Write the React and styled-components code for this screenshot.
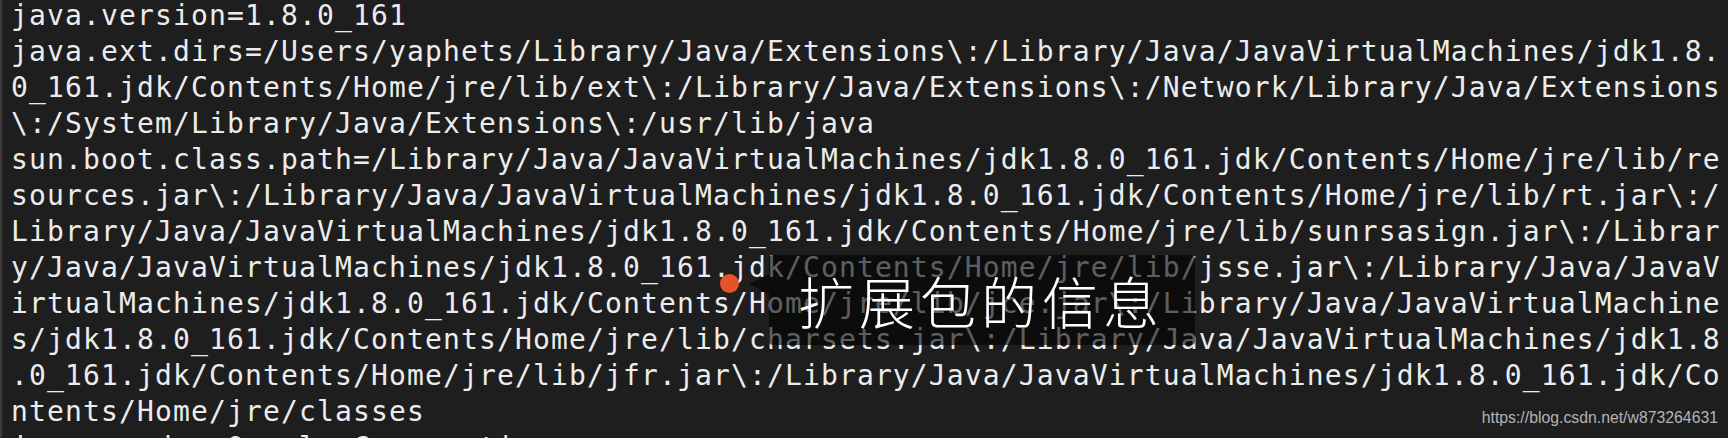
import React from "react"
import styled, { createGlobalStyle } from "styled-components"

const GlobalStyle = createGlobalStyle`
  html, body {
    margin: 0;
    padding: 0;
    background: #1e1e1e;
    overflow: hidden;
  }
`

const Terminal = styled.div`
  position: relative;
  box-sizing: border-box;
  width: 1728px;
  height: 438px;
  overflow: hidden;
  padding: 0 0 0 9px;
  border-left: 2px solid #3a3a3a;
  background: #1e1e1e;
  color: #ececec;
  font-family: "DejaVu Sans Mono", "Liberation Mono", monospace;
  font-size: 28px;
  letter-spacing: 1.14px;
  line-height: 36px;
`

const Rows = styled.div`
  margin-top: -2px;
`

const Row = styled.div`
  white-space: pre;
`

const Callout = styled.div`
  position: absolute;
  left: 718px;
  top: 255px;
  display: flex;
  align-items: flex-start;
`

const Dot = styled.span`
  width: 19px;
  height: 19px;
  margin-top: 19px;
  border-radius: 50%;
  background: #e8522a;
  flex-shrink: 0;
`

const Bubble = styled.div`
  position: relative;
  box-sizing: border-box;
  width: 426px;
  height: 90px;
  margin-left: 30px;
  padding-left: 29px;
  display: flex;
  align-items: center;
  border-radius: 4px;
  background: rgba(0, 0, 0, 0.6);
  color: #ffffff;
  font-family: "Noto Sans CJK SC", sans-serif;
  font-weight: 300;
  font-size: 56px;
  letter-spacing: 5px;
  line-height: 1;

  &::before {
    content: "";
    position: absolute;
    left: -20px;
    top: 19px;
    border-top: 10px solid transparent;
    border-bottom: 10px solid transparent;
    border-right: 20px solid rgba(0, 0, 0, 0.6);
  }
`

const Watermark = styled.div`
  position: absolute;
  right: 10px;
  top: 406px;
  color: #b4b4b4;
  font-family: "Liberation Sans", Arial, sans-serif;
  font-size: 15.8px;
  letter-spacing: 0;
  line-height: 24px;
`

const lines = [
  "java.version=1.8.0_161",
  "java.ext.dirs=/Users/yaphets/Library/Java/Extensions\\:/Library/Java/JavaVirtualMachines/jdk1.8.",
  "0_161.jdk/Contents/Home/jre/lib/ext\\:/Library/Java/Extensions\\:/Network/Library/Java/Extensions",
  "\\:/System/Library/Java/Extensions\\:/usr/lib/java",
  "sun.boot.class.path=/Library/Java/JavaVirtualMachines/jdk1.8.0_161.jdk/Contents/Home/jre/lib/re",
  "sources.jar\\:/Library/Java/JavaVirtualMachines/jdk1.8.0_161.jdk/Contents/Home/jre/lib/rt.jar\\:/",
  "Library/Java/JavaVirtualMachines/jdk1.8.0_161.jdk/Contents/Home/jre/lib/sunrsasign.jar\\:/Librar",
  "y/Java/JavaVirtualMachines/jdk1.8.0_161.jdk/Contents/Home/jre/lib/jsse.jar\\:/Library/Java/JavaV",
  "irtualMachines/jdk1.8.0_161.jdk/Contents/Home/jre/lib/jce.jar\\:/Library/Java/JavaVirtualMachine",
  "s/jdk1.8.0_161.jdk/Contents/Home/jre/lib/charsets.jar\\:/Library/Java/JavaVirtualMachines/jdk1.8",
  ".0_161.jdk/Contents/Home/jre/lib/jfr.jar\\:/Library/Java/JavaVirtualMachines/jdk1.8.0_161.jdk/Co",
  "ntents/Home/jre/classes",
  "java.vendor=Oracle Corporation",
]

export default function App() {
  return (
    <>
      <GlobalStyle />
      <Terminal>
        <Rows>
          {lines.map((line, i) => (
            <Row key={i}>{line}</Row>
          ))}
        </Rows>
        <Callout>
          <Dot />
          <Bubble>扩展包的信息</Bubble>
        </Callout>
        <Watermark>https://blog.csdn.net/w873264631</Watermark>
      </Terminal>
    </>
  )
}
